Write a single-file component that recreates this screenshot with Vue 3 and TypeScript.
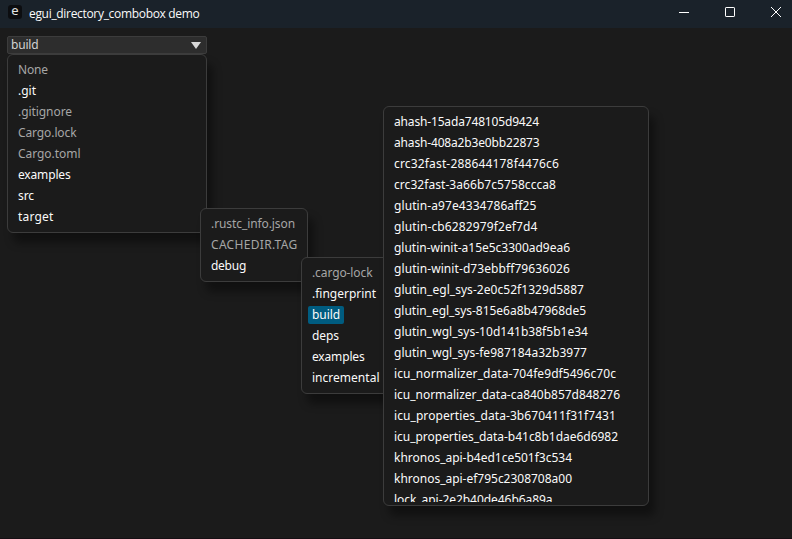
<script setup lang="ts">
import { onMounted, ref } from 'vue'

interface Entry {
  name: string
  width: number
  file?: boolean
  selected?: boolean
}

interface Menu {
  id: string
  entries: Entry[]
}

const file = (name: string, width: number): Entry => ({ name, width, file: true })
const dir = (name: string, width: number, selected = false): Entry => ({ name, width, selected })

const menus: Menu[] = [
  {
    id: 'root',
    entries: [
      file('None', 30), dir('.git', 18), file('.gitignore', 54), file('Cargo.lock', 58.5),
      file('Cargo.toml', 62.5), dir('examples', 52.5), dir('src', 16), dir('target', 35.5),
    ],
  },
  {
    id: 'target',
    entries: [file('.rustc_info.json', 84), file('CACHEDIR.TAG', 86.5), dir('debug', 35)],
  },
  {
    id: 'debug',
    entries: [
      file('.cargo-lock', 60.5), dir('.fingerprint', 64), dir('build', 28, true),
      dir('deps', 27), dir('examples', 52.5), dir('incremental', 67.5),
    ],
  },
  {
    id: 'build',
    entries: [
      dir('ahash-15ada748105d9424', 145),
      dir('ahash-408a2b3e0bb22873', 145.5),
      dir('crc32fast-288644178f4476c6', 165),
      dir('crc32fast-3a66b7c5758ccca8', 162),
      dir('glutin-a97e4334786aff25', 142.5),
      dir('glutin-cb6282979f2ef7d4', 143.5),
      dir('glutin-winit-a15e5c3300ad9ea6', 176),
      dir('glutin-winit-d73ebbff79636026', 176),
      dir('glutin_egl_sys-2e0c52f1329d5887', 190),
      dir('glutin_egl_sys-815e6a8b47968de5', 192),
      dir('glutin_wgl_sys-10d141b38f5b1e34', 194),
      dir('glutin_wgl_sys-fe987184a32b3977', 193),
      dir('icu_normalizer_data-704fe9df5496c70c', 222),
      dir('icu_normalizer_data-ca840b857d848276', 226),
      dir('icu_properties_data-3b670411f31f7431', 222),
      dir('icu_properties_data-b41c8b1dae6d6982', 224),
      dir('khronos_api-b4ed1ce501f3c534', 178),
      dir('khronos_api-ef795c2308708a00', 178),
      dir('lock_api-2e2b40de46b6a89a', 158.5),
    ],
  },
]

const root = ref<HTMLElement | null>(null)

// Tracks each label so that it fills its nominal width.
onMounted(() => {
  root.value?.querySelectorAll<HTMLElement>('[data-width]').forEach((el) => {
    const wanted = Number(el.dataset.width)
    const natural = el.getBoundingClientRect().width
    const count = el.textContent?.length ?? 1
    el.style.letterSpacing = `${(wanted - natural) / count}px`
  })
})
</script>

<template>
  <div ref="root" class="window">
    <header class="titlebar">
      <span class="logo">e</span>
      <span class="title"><span data-width="170.5">egui_directory_combobox demo</span></span>
      <div class="controls">
        <svg width="12" height="12" viewBox="0 0 12 12"><path d="M1 6.5h10" /></svg>
        <svg width="12" height="12" viewBox="0 0 12 12"><rect x="1.5" y="1.5" width="9" height="9" rx="0.6" /></svg>
        <svg width="12" height="12" viewBox="0 0 12 12"><path d="M1 1l10 10M11 1L1 11" /></svg>
      </div>
    </header>
    <main class="content">
      <div class="combo">
        <span data-width="27.5">build</span>
        <svg width="10" height="7" viewBox="0 0 10 7"><path d="M0 0h10L5 7z" /></svg>
      </div>
    </main>
    <div v-for="menu in menus" :key="menu.id" class="menu" :class="menu.id">
      <ul class="entries">
        <li
          v-for="entry in menu.entries"
          :key="entry.name"
          class="entry"
          :class="{ file: entry.file, selected: entry.selected }"
        >
          <span :data-width="entry.width">{{ entry.name }}</span>
        </li>
      </ul>
    </div>
  </div>
</template>

<style>
body {
  background: #1b1b1b;
}
</style>

<style scoped>
.window {
  position: relative;
  box-sizing: border-box;
  width: 792px;
  height: 539px;
  overflow: hidden;
  background: #1b1b1b;
  border-bottom: 1px solid #160f14;
  font-family: 'Noto Sans', 'Open Sans', sans-serif;
  font-size: 12px;
  color: #fafafa;
  white-space: nowrap;
}
.titlebar {
  display: flex;
  align-items: center;
  height: 28px;
  padding: 0 10px 0 8px;
  box-sizing: border-box;
  background: #1a222a;
}
.logo {
  width: 14px;
  height: 14px;
  margin: -4px 7px 0 0;
  border-radius: 3px;
  background: #0c0d10;
  font: 13px/11px 'Noto Sans', sans-serif;
  text-align: center;
  color: #e4e4e4;
}
.title {
  font-family: 'Open Sans', sans-serif;
  line-height: 16px;
  padding-bottom: 1px;
}
.controls {
  display: flex;
  gap: 34px;
  margin: -4px 0 0 auto;
}
.controls svg {
  display: block;
  fill: none;
  stroke: #fff;
  stroke-width: 1;
}
.content {
  padding: 8px 7px;
}
.combo {
  display: flex;
  align-items: center;
  justify-content: space-between;
  box-sizing: border-box;
  width: 200px;
  height: 18px;
  padding: 0 5px 0 3px;
  border: 1px solid #3c3c3c;
  border-radius: 2px;
  background: #2d2d2d;
  line-height: 16px;
  color: #d2d2d2;
}
.combo svg {
  fill: #d8d8d8;
}
.menu {
  position: absolute;
  box-sizing: border-box;
  padding: 4px 6px 3px;
  border: 1px solid #3c3c3c;
  border-radius: 6px;
  background: #1b1b1b;
  box-shadow: 6px 10px 8px rgba(0, 0, 0, 0.38);
}
.root {
  left: 7px;
  top: 54px;
  width: 200px;
  height: 179px;
}
.target {
  left: 200px;
  top: 208px;
  width: 108px;
  height: 74px;
}
.debug {
  left: 301px;
  top: 257px;
  width: 90px;
  height: 137px;
}
.build {
  left: 383px;
  top: 106px;
  width: 266px;
  height: 400px;
}
.entries {
  display: flex;
  flex-direction: column;
  align-items: flex-start;
  gap: 3px;
  height: 100%;
  margin: 0;
  padding: 2px 0 0;
  box-sizing: border-box;
  overflow: hidden;
  list-style: none;
}
.entry {
  flex: none;
  height: 18px;
  padding: 0 4px;
  border-radius: 2px;
  line-height: 17px;
}
.entry.file {
  color: #a6a6a6;
}
.entry.selected {
  background: #005c80;
}
</style>
